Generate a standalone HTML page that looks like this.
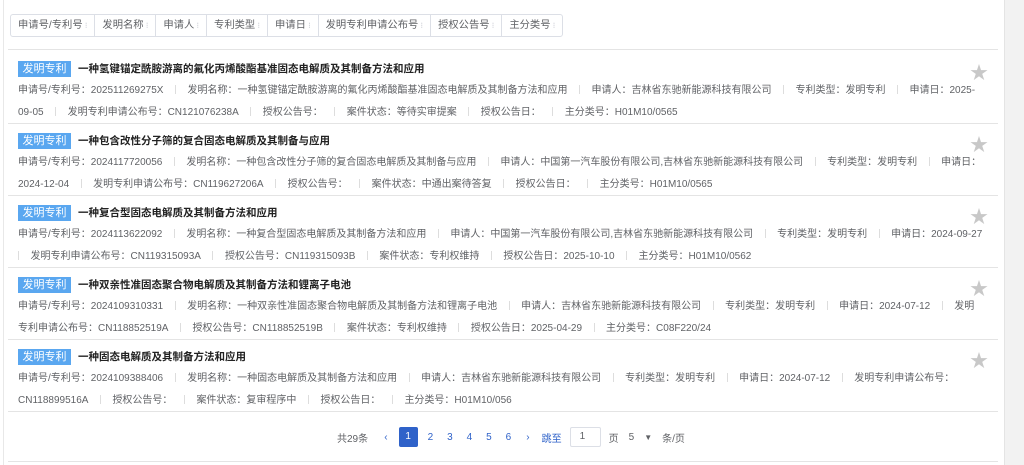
<!DOCTYPE html>
<html><head><meta charset="utf-8"><style>
*{margin:0;padding:0;box-sizing:border-box}
body{width:1024px;height:465px;background:#fff;font-family:"Liberation Sans","Noto Sans CJK SC",sans-serif;position:relative;overflow:hidden;color:#606266}
.side{position:absolute;left:1004px;top:0;width:20px;height:465px;background:#f2f2f2;border-left:1px solid #e4e4e4}
.wrap{position:absolute;left:3px;top:0;width:1001px;height:465px;border-left:1px solid #e8e8e8}
.filters{position:absolute;left:10px;top:14px;height:23px;display:flex;border:1px solid #dcdfe6;border-radius:3px}
.filters div{font-size:10.3px;color:#606266;padding:0 7px;line-height:21px;border-right:1px solid #dcdfe6;white-space:nowrap}
.filters div:last-child{border-right:0}
.filters div:after{content:" ⁝";color:#c0c4cc;font-size:8px}
.hr{position:absolute;left:8px;width:990px;height:1px;background:#e4e4e4}
.item{position:absolute;left:18px;width:975px}
.tag{position:absolute;left:0;top:0;height:16px;width:53px;background:#5aa7f0;color:#fff;font-size:11px;line-height:16px;text-align:center}
.title{position:absolute;left:60px;top:0;font-size:10.5px;font-weight:bold;color:#222;line-height:16px;white-space:nowrap}
.star{position:absolute;left:952px;top:-2px;color:#c8c8c8;font-size:18px}
.ln{position:absolute;left:0;font-size:10px;line-height:14px;white-space:nowrap;color:#606266}
.s{display:inline-block;width:1px;height:9px;background:#ddd;margin:0 11.5px;vertical-align:-1px}
.pg{position:absolute;top:427px;left:337px;display:flex;align-items:center;font-size:10px;color:#606266}
.pg .n{color:#2f62c9;width:19.5px;text-align:center}
.pg .a{background:#2f62c9;color:#fff;width:19px;height:20px;line-height:20px;border-radius:2px;margin:0 3px}
</style></head><body>
<div class="side"></div>
<div class="wrap"></div>
<div class="filters"><div>申请号/专利号</div><div>发明名称</div><div>申请人</div><div>专利类型</div><div>申请日</div><div>发明专利申请公布号</div><div>授权公告号</div><div>主分类号</div></div>
<div class="hr" style="top:49px"></div>

<div class="item" style="top:61px"><div class="tag">发明专利</div><div class="title">一种氢键锚定酰胺游离的氟化丙烯酸酯基准固态电解质及其制备方法和应用</div><div class="star">★</div>
<div class="ln" style="top:23px">申请号/专利号：202511269275X<span class="s"></span>发明名称：一种氢键锚定酰胺游离的氟化丙烯酸酯基准固态电解质及其制备方法和应用<span class="s"></span>申请人：吉林省东驰新能源科技有限公司<span class="s"></span>专利类型：发明专利<span class="s"></span>申请日：2025-</div>
<div class="ln" style="top:45px">09-05<span class="s"></span>发明专利申请公布号：CN121076238A<span class="s"></span>授权公告号：<span class="s"></span>案件状态：等待实审提案<span class="s"></span>授权公告日：<span class="s"></span>主分类号：H01M10/0565</div></div>
<div class="hr" style="top:123px"></div>

<div class="item" style="top:133px"><div class="tag">发明专利</div><div class="title">一种包含改性分子筛的复合固态电解质及其制备与应用</div><div class="star">★</div>
<div class="ln" style="top:23px">申请号/专利号：2024117720056<span class="s"></span>发明名称：一种包含改性分子筛的复合固态电解质及其制备与应用<span class="s"></span>申请人：中国第一汽车股份有限公司,吉林省东驰新能源科技有限公司<span class="s"></span>专利类型：发明专利<span class="s"></span>申请日：</div>
<div class="ln" style="top:45px">2024-12-04<span class="s"></span>发明专利申请公布号：CN119627206A<span class="s"></span>授权公告号：<span class="s"></span>案件状态：中通出案待答复<span class="s"></span>授权公告日：<span class="s"></span>主分类号：H01M10/0565</div></div>
<div class="hr" style="top:195px"></div>

<div class="item" style="top:205px"><div class="tag">发明专利</div><div class="title">一种复合型固态电解质及其制备方法和应用</div><div class="star">★</div>
<div class="ln" style="top:23px">申请号/专利号：2024113622092<span class="s"></span>发明名称：一种复合型固态电解质及其制备方法和应用<span class="s"></span>申请人：中国第一汽车股份有限公司,吉林省东驰新能源科技有限公司<span class="s"></span>专利类型：发明专利<span class="s"></span>申请日：2024-09-27</div>
<div class="ln" style="top:45px"><span class="s" style="margin-left:0"></span>发明专利申请公布号：CN119315093A<span class="s"></span>授权公告号：CN119315093B<span class="s"></span>案件状态：专利权维持<span class="s"></span>授权公告日：2025-10-10<span class="s"></span>主分类号：H01M10/0562</div></div>
<div class="hr" style="top:267px"></div>

<div class="item" style="top:277px"><div class="tag">发明专利</div><div class="title">一种双亲性准固态聚合物电解质及其制备方法和锂离子电池</div><div class="star">★</div>
<div class="ln" style="top:23px">申请号/专利号：2024109310331<span class="s"></span>发明名称：一种双亲性准固态聚合物电解质及其制备方法和锂离子电池<span class="s"></span>申请人：吉林省东驰新能源科技有限公司<span class="s"></span>专利类型：发明专利<span class="s"></span>申请日：2024-07-12<span class="s"></span>发明</div>
<div class="ln" style="top:45px">专利申请公布号：CN118852519A<span class="s"></span>授权公告号：CN118852519B<span class="s"></span>案件状态：专利权维持<span class="s"></span>授权公告日：2025-04-29<span class="s"></span>主分类号：C08F220/24</div></div>
<div class="hr" style="top:339px"></div>

<div class="item" style="top:349px"><div class="tag">发明专利</div><div class="title">一种固态电解质及其制备方法和应用</div><div class="star">★</div>
<div class="ln" style="top:23px">申请号/专利号：2024109388406<span class="s"></span>发明名称：一种固态电解质及其制备方法和应用<span class="s"></span>申请人：吉林省东驰新能源科技有限公司<span class="s"></span>专利类型：发明专利<span class="s"></span>申请日：2024-07-12<span class="s"></span>发明专利申请公布号：</div>
<div class="ln" style="top:45px">CN118899516A<span class="s"></span>授权公告号：<span class="s"></span>案件状态：复审程序中<span class="s"></span>授权公告日：<span class="s"></span>主分类号：H01M10/056</div></div>
<div class="hr" style="top:411px"></div>

<div class="pg"><span style="margin-right:8px">共29条</span><span class="n">‹</span><span class="n a">1</span><span class="n">2</span><span class="n">3</span><span class="n">4</span><span class="n">5</span><span class="n">6</span><span class="n">›</span><span style="color:#2f62c9;margin:0 8px 0 4px">跳至</span><span style="display:inline-block;width:31px;height:20px;border:1px solid #dcdfe6;border-radius:2px;line-height:18px;padding-left:9px">1</span><span style="margin:0 10px 0 8px">页</span><span>5</span><span style="margin:0 10px;font-size:8px">▼</span><span>条/页</span></div>
<div class="hr" style="top:461px"></div>
</body></html>
